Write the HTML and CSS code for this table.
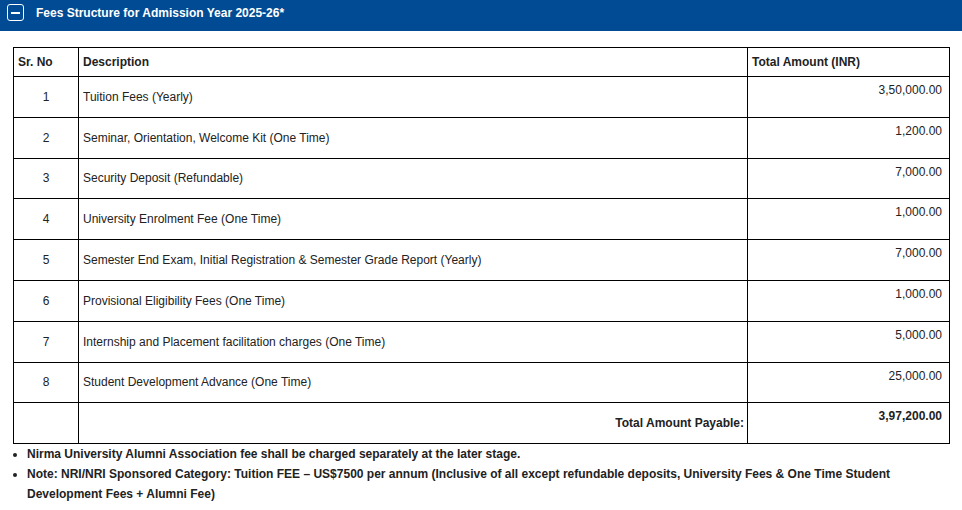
FILE: index.html
```html
<!DOCTYPE html>
<html>
<head>
<meta charset="utf-8">
<link rel="stylesheet" href="styles.css">
</head>
<body>
<div class="bar">
  <span class="toggle"><span class="minus"></span></span>
  <span class="title">Fees Structure for Admission Year 2025-26*</span>
</div>
<div class="content">
  <table class="fees">
    <colgroup><col class="c1"><col class="c2"><col class="c3"></colgroup>
    <thead>
      <tr><th>Sr. No</th><th>Description</th><th>Total Amount (INR)</th></tr>
    </thead>
    <tbody>
      <tr><td class="sr">1</td><td class="desc">Tuition Fees (Yearly)</td><td class="amt">3,50,000.00</td></tr>
      <tr><td class="sr">2</td><td class="desc">Seminar, Orientation, Welcome Kit (One Time)</td><td class="amt">1,200.00</td></tr>
      <tr><td class="sr">3</td><td class="desc">Security Deposit (Refundable)</td><td class="amt">7,000.00</td></tr>
      <tr><td class="sr">4</td><td class="desc">University Enrolment Fee (One Time)</td><td class="amt">1,000.00</td></tr>
      <tr><td class="sr">5</td><td class="desc">Semester End Exam, Initial Registration &amp; Semester Grade Report (Yearly)</td><td class="amt">7,000.00</td></tr>
      <tr><td class="sr">6</td><td class="desc">Provisional Eligibility Fees (One Time)</td><td class="amt">1,000.00</td></tr>
      <tr><td class="sr">7</td><td class="desc">Internship and Placement facilitation charges (One Time)</td><td class="amt">5,000.00</td></tr>
      <tr><td class="sr">8</td><td class="desc">Student Development Advance (One Time)</td><td class="amt">25,000.00</td></tr>
      <tr><td class="sr"></td><td class="desc total">Total Amount Payable:</td><td class="amt total">3,97,200.00</td></tr>
    </tbody>
  </table>
  <ul class="notes">
    <li>Nirma University Alumni Association fee shall be charged separately at the later stage.</li>
    <li>Note: NRI/NRI Sponsored Category: Tuition FEE – US$7500 per annum (Inclusive of all except refundable deposits, University Fees &amp; One Time Student Development Fees + Alumni Fee)</li>
  </ul>
</div>
</body>
</html>
```
FILE: styles.css
```css
html, body {
  margin: 0;
  padding: 0;
  background: #fff;
  font-family: "Liberation Sans", Arial, sans-serif;
  font-size: 12px;
  color: #222;
}
.bar {
  background: #004b93;
  height: 31px;
  box-sizing: border-box;
  padding: 4px 7px 0;
  display: flex;
  align-items: flex-start;
}
.toggle {
  width: 17px;
  height: 17px;
  box-sizing: border-box;
  border: 1.5px solid #fff;
  border-radius: 3px;
  display: flex;
  align-items: center;
  justify-content: center;
}
.minus {
  width: 9px;
  height: 2px;
  background: #fff;
}
.title {
  color: #fff;
  font-weight: bold;
  font-size: 12px;
  line-height: 18px;
  margin-left: 12px;
}
.content {
  padding: 16px 13px 0;
}
.fees {
  border-collapse: collapse;
  width: 936px;
  table-layout: fixed;
}
.c1 { width: 65px; }
.c2 { width: 669px; }
.c3 { width: 202px; }
.fees th, .fees td {
  border: 1px solid #000;
  padding: 0 4px;
  line-height: 14px;
}
.fees th {
  text-align: left;
  font-weight: bold;
  height: 28px;
  vertical-align: middle;
}
.fees td {
  height: 39.8px;
}
.sr {
  text-align: center;
  vertical-align: middle;
}
.desc {
  vertical-align: middle;
}
.fees td.amt {
  text-align: right;
  vertical-align: top;
  padding: 6px 7px 0 4px;
  height: 33.8px;
}
.fees td.desc.total {
  font-weight: bold;
  text-align: right;
  padding-right: 3px;
}
.fees td.amt.total {
  font-weight: bold;
}
.notes {
  margin: 0;
  padding: 0 0 0 14px;
  font-weight: bold;
  line-height: 20px;
}
```
